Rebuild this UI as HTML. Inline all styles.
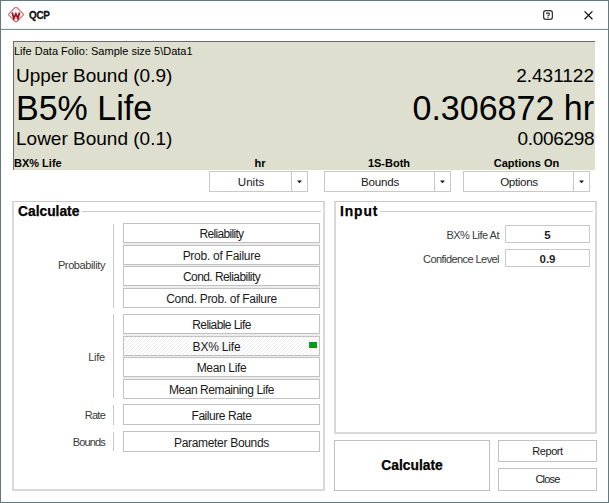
<!DOCTYPE html>
<html><head><meta charset="utf-8">
<style>
*{margin:0;padding:0;box-sizing:border-box}
html,body{width:609px;height:503px;overflow:hidden;background:#fff}
body{position:relative;font-family:"Liberation Sans",sans-serif;color:#000}
.a{position:absolute}
.win{left:0;top:0;width:609px;height:503px;border:1px solid #627a7d}
.tline{left:1px;top:29px;width:607px;height:1px;background:#7b8f91;box-shadow:0 -1px 0 #eef1f1}
.panel{left:13px;top:41px;width:582px;height:129px;background:#dedfce;border-top:1px solid #6b6b6b;border-left:1px solid #6b6b6b}
.t{white-space:nowrap;line-height:1}
.dd{background:#fff;border:1px solid #c9c9c9;height:21px}
.dd .div{position:absolute;right:15px;top:0;width:1px;height:19px;background:#c9c9c9}
.dd .lab{position:absolute;left:0;top:0;height:19px;line-height:19px;text-align:center;font-size:11.6px;color:#1a1a1a}
.dd .arr{position:absolute;right:5px;top:8px;width:5px;height:4px}
.grp{border:2px solid #d9d9d9;border-top:1px solid #c9c9c9}
.gh{font-weight:bold;font-size:13.8px;background:#fff;-webkit-text-stroke:0.25px #000}
.hl{height:1px;background:#c8c8c8}
.btn{background:#fff;border:1px solid #c2c2c2;text-align:center;font-size:12px;color:#1a1a1a;padding-top:1px}
.gap{background:#ececec;left:123px;width:197px}
.sep{width:1px;background:#c8c8c8}
.lbl{font-size:11px;color:#3a3a3a;text-align:right}
.inp{background:#fff;border:1px solid #c8c8c8;text-align:center;font-size:11.5px;font-weight:bold;color:#1e1e2a;padding-top:1px}
</style></head><body>
<div class="a win"></div>
<div class="a tline"></div>
<!-- title icon -->
<svg class="a" style="left:6px;top:5px" width="20" height="20" viewBox="0 0 20 20">
  <path d="M10 2.3 Q10.6 2.3 11.1 2.8 L17.2 8.9 Q17.8 9.5 17.2 10.1 L11.1 16.2 Q10 17.3 8.9 16.2 L2.8 10.1 Q2.2 9.5 2.8 8.9 L8.9 2.8 Q9.4 2.3 10 2.3 Z" fill="#f0f6f6" stroke="#d27880" stroke-width="1.3"/>
  <path d="M6.2 7.4 L7.9 13.3 L9.9 8.9 L11.9 13.3 L13.6 7.4" fill="none" stroke="#a30f1d" stroke-width="1.8" stroke-linejoin="miter" stroke-miterlimit="3" stroke-linecap="butt"/>
</svg>
<div class="a t" style="left:29px;top:10px;font-size:11.5px;font-weight:bold;color:#111;letter-spacing:-0.3px;transform:scaleX(0.86);transform-origin:0 0;-webkit-text-stroke:0.3px #111">QCP</div>
<!-- help icon -->
<svg class="a" style="left:542px;top:9px" width="12" height="12" viewBox="0 0 12 12">
  <rect x="1.6" y="1.6" width="8.8" height="8.8" rx="2.3" fill="none" stroke="#333" stroke-width="1.25"/>
  <path d="M4.6 4.9 L4.6 4.1 L7.2 4.1 L7.2 6.0 L6 6.6 L6 7.6" fill="none" stroke="#333" stroke-width="1.1" stroke-linejoin="round"/>
  <rect x="5.45" y="8.1" width="1.1" height="1.1" fill="#333"/>
</svg>
<!-- close X -->
<svg class="a" style="left:583px;top:10px" width="11" height="11" viewBox="0 0 11 11">
  <path d="M1.6 1.4 L9.4 9.2 M9.4 1.4 L1.6 9.2" stroke="#111" stroke-width="1.25"/>
</svg>

<!-- gray results panel -->
<div class="a panel"></div>
<div class="a t" style="left:14px;top:46px;font-size:11px">Life Data Folio: Sample size 5\Data1</div>
<div class="a t" style="left:16px;top:66px;font-size:19px">Upper Bound (0.9)</div>
<div class="a t" style="left:16px;top:90px;font-size:34px;transform:scaleY(1.05);transform-origin:0 0">B5% Life</div>
<div class="a t" style="left:16px;top:129px;font-size:19px">Lower Bound (0.1)</div>
<div class="a t" style="right:15px;top:66px;font-size:19px">2.431122</div>
<div class="a t" style="right:15px;top:90px;font-size:34px;transform:scaleY(1.05);transform-origin:0 0">0.306872 hr</div>
<div class="a t" style="right:15px;top:129px;font-size:19px;letter-spacing:-0.3px;margin-right:-0.3px">0.006298</div>
<div class="a t" style="left:14px;top:158px;font-size:11px;font-weight:bold">BX% Life</div>
<div class="a t" style="left:210px;width:100px;top:158px;font-size:11px;font-weight:bold;text-align:center">hr</div>
<div class="a t" style="left:325px;width:128px;top:158px;font-size:11px;font-weight:bold;text-align:center">1S-Both</div>
<div class="a t" style="left:463px;width:127px;top:158px;font-size:11px;font-weight:bold;text-align:center">Captions On</div>

<!-- dropdowns -->
<div class="a dd" style="left:209px;top:171px;width:99px"><div class="lab" style="width:82px">Units</div><div class="div"></div><svg class="arr" viewBox="0 0 5 4"><path d="M0 0.4 L5 0.4 L2.5 3.2 Z" fill="#1a1a1a"/></svg></div>
<div class="a dd" style="left:324px;top:171px;width:127px"><div class="lab" style="width:110px;letter-spacing:-0.2px">Bounds</div><div class="div"></div><svg class="arr" viewBox="0 0 5 4"><path d="M0 0.4 L5 0.4 L2.5 3.2 Z" fill="#1a1a1a"/></svg></div>
<div class="a dd" style="left:463px;top:171px;width:127px"><div class="lab" style="width:110px;letter-spacing:-0.33px">Options</div><div class="div"></div><svg class="arr" viewBox="0 0 5 4"><path d="M0 0.4 L5 0.4 L2.5 3.2 Z" fill="#1a1a1a"/></svg></div>

<!-- Calculate group -->
<div class="a grp" style="left:12px;top:201px;width:313px;height:290px"></div>
<div class="a hl" style="left:81px;top:211px;width:240px"></div>
<div class="a t gh" style="left:18px;top:205px;padding-right:3px">Calculate</div>

<div class="a gap" style="top:243px;height:2px"></div><div class="a gap" style="top:265px;height:1px"></div><div class="a gap" style="top:286px;height:2px"></div>
<div class="a lbl t" style="letter-spacing:-0.39px;left:40px;width:65px;top:260px">Probability</div>
<div class="a sep" style="left:113px;top:224px;height:84px"></div>
<div class="a btn" style="letter-spacing:-0.68px;left:123px;top:223px;width:197px;height:20px;line-height:19px">Reliability</div>
<div class="a btn" style="letter-spacing:-0.27px;left:123px;top:245px;width:197px;height:20px;line-height:19px">Prob. of Failure</div>
<div class="a btn" style="letter-spacing:-0.56px;left:123px;top:266px;width:197px;height:20px;line-height:19px">Cond. Reliability</div>
<div class="a btn" style="letter-spacing:-0.31px;left:123px;top:288px;width:197px;height:20px;line-height:19px">Cond. Prob. of Failure</div>

<div class="a gap" style="top:334px;height:2px"></div><div class="a gap" style="top:356px;height:1px"></div><div class="a gap" style="top:377px;height:2px"></div>
<div class="a lbl t" style="letter-spacing:-0.23px;left:40px;width:65px;top:352px">Life</div>
<div class="a sep" style="left:113px;top:314px;height:84px"></div>
<div class="a btn" style="letter-spacing:-0.58px;left:123px;top:314px;width:197px;height:20px;line-height:19px">Reliable Life</div>
<div class="a btn" style="left:123px;top:336px;width:197px;height:20px;"><svg class="a" style="left:0;top:0" width="195" height="18"><defs><pattern id="hp" width="4" height="4" patternUnits="userSpaceOnUse"><rect x="3" y="0" width="1" height="1" fill="#eaeaea"/><rect x="2" y="1" width="1" height="1" fill="#eaeaea"/><rect x="1" y="2" width="1" height="1" fill="#eaeaea"/><rect x="0" y="3" width="1" height="1" fill="#eaeaea"/></pattern></defs><rect width="195" height="18" fill="url(#hp)"/></svg><div class="a" style="left:0;top:1px;width:185px;height:18px;line-height:19px;letter-spacing:-0.19px;text-align:center">BX% Life</div><div class="a" style="left:185px;top:5px;width:8px;height:6px;background:#0b981b"></div></div>
<div class="a btn" style="letter-spacing:-0.34px;left:123px;top:357px;width:197px;height:20px;line-height:19px">Mean Life</div>
<div class="a btn" style="letter-spacing:-0.44px;left:123px;top:379px;width:197px;height:20px;line-height:19px">Mean Remaining Life</div>

<div class="a lbl t" style="letter-spacing:-0.77px;left:40px;width:65px;top:410px">Rate</div>
<div class="a sep" style="left:113px;top:405px;height:20px"></div>
<div class="a btn" style="letter-spacing:-0.45px;left:123px;top:404px;width:197px;height:21px;line-height:20px">Failure Rate</div>

<div class="a lbl t" style="letter-spacing:-0.86px;left:40px;width:65px;top:437px">Bounds</div>
<div class="a sep" style="left:113px;top:432px;height:19px"></div>
<div class="a btn" style="letter-spacing:-0.31px;left:123px;top:431px;width:197px;height:21px;line-height:20px">Parameter Bounds</div>

<!-- Input group -->
<div class="a grp" style="left:334px;top:201px;width:263px;height:233px"></div>
<div class="a hl" style="left:379px;top:211px;width:214px"></div>
<div class="a t gh" style="left:340px;top:205px;padding-right:2px;letter-spacing:0.9px">Input</div>
<div class="a lbl t" style="letter-spacing:-0.5px;left:380px;width:119px;top:230px">BX% Life At</div>
<div class="a inp" style="left:505px;top:225px;width:85px;height:18px;line-height:17px">5</div>
<div class="a lbl t" style="letter-spacing:-0.57px;left:380px;width:119px;top:254px">Confidence Level</div>
<div class="a inp" style="left:505px;top:249px;width:85px;height:18px;line-height:17px">0.9</div>

<!-- bottom buttons -->
<div class="a btn" style="left:334px;top:440px;width:156px;height:51px;line-height:48px;font-size:13.8px;font-weight:bold;color:#000;-webkit-text-stroke:0.25px #000">Calculate</div>
<div class="a btn" style="letter-spacing:-0.46px;left:498px;top:440px;width:99px;height:22px;line-height:18px;font-size:11px">Report</div>
<div class="a btn" style="letter-spacing:-0.83px;left:498px;top:468px;width:99px;height:23px;line-height:18px;font-size:11px">Close</div>
</body></html>
